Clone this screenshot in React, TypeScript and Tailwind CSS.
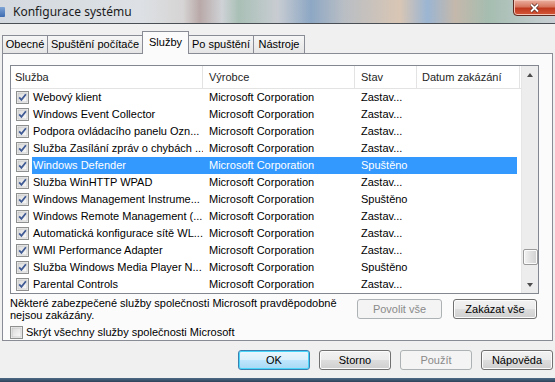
const rows: { name: string; state: string; selected?: boolean }[] = [
  { name: "Webový klient", state: "Zastav..." },
  { name: "Windows Event Collector", state: "Zastav..." },
  { name: "Podpora ovládacího panelu Ozn...", state: "Zastav..." },
  { name: "Služba Zasílání zpráv o chybách ...", state: "Zastav..." },
  { name: "Windows Defender", state: "Spuštěno", selected: true },
  { name: "Služba WinHTTP WPAD", state: "Zastav..." },
  { name: "Windows Management Instrume...", state: "Spuštěno" },
  { name: "Windows Remote Management (...", state: "Zastav..." },
  { name: "Automatická konfigurace sítě WL...", state: "Zastav..." },
  { name: "WMI Performance Adapter", state: "Zastav..." },
  { name: "Služba Windows Media Player N...", state: "Spuštěno" },
  { name: "Parental Controls", state: "Zastav..." },
];

const tabs = [
  { label: "Obecné", w: "w-[46px]" },
  { label: "Spuštění počítače", w: "w-[96px]" },
  { label: "Služby", w: "w-[47px]" },
  { label: "Po spuštění", w: "w-[66px]" },
  { label: "Nástroje", w: "w-[52px]" },
];

function CheckBox({ checked }: { checked: boolean }) {
  return (
    <svg width="13" height="13" viewBox="0 0 13 13" className="shrink-0">
      <defs>
        <linearGradient id="cbg" x1="0" y1="0" x2="1" y2="1">
          <stop offset="0" stopColor="#d9d9d9" />
          <stop offset="1" stopColor="#fbfbfb" />
        </linearGradient>
      </defs>
      <rect x="0.5" y="0.5" width="12" height="12" fill="#f4f4f4" stroke="#8e8f8f" />
      <rect x="2" y="2" width="9" height="9" fill="url(#cbg)" stroke="#b9b9b9" strokeWidth="0.6" />
      {checked && (
        <path d="M3.2 6.4 L5.4 8.8 L9.9 3.2" fill="none" stroke="#3f5a94" strokeWidth="1.8" />
      )}
    </svg>
  );
}

function Button({ label, disabled, primary, w }: { label: string; disabled?: boolean; primary?: boolean; w: string }) {
  if (disabled) {
    return (
      <div className={`${w} flex h-[20px] items-center justify-center rounded-[3px] border border-[#adb2b5] bg-[#f4f4f4] text-[#8a8a8a]`}>
        {label}
      </div>
    );
  }
  if (primary) {
    return (
      <div className={`${w} flex h-[20px] items-center justify-center rounded-[3px] border border-[#3c7fb1] bg-[linear-gradient(#eaf6fd_0%,#d9f0fc_50%,#bee6fd_51%,#a7d9f5_100%)] text-black shadow-[inset_0_0_0_1px_#48d6fb]`}>
        {label}
      </div>
    );
  }
  return (
    <div className={`${w} flex h-[20px] items-center justify-center rounded-[3px] border border-[#707070] bg-[linear-gradient(#f2f2f2_0%,#ebebeb_50%,#dddddd_51%,#cfcfcf_100%)] text-black shadow-[inset_0_0_0_1px_#fcfcfc]`}>
      {label}
    </div>
  );
}

export default function App() {
  return (
    <div className="flex h-[382px] w-[555px] flex-col overflow-hidden bg-[#f0f0f0] font-['Liberation_Sans',Arial,sans-serif] text-[11px] text-black">
      {/* title bar */}
      <div className="relative flex h-[24px] shrink-0 items-center border-b border-[#4a4f55] bg-[linear-gradient(90deg,#d3d9df_0%,#dde1e5_25%,#d6d4d4_33%,#b9a9a8_36%,#cfd2d6_40%,#a9c0b6_43%,#c8ccd2_50%,#8da7c4_56%,#b9bec4_62%,#d9c6b4_72%,#9bb5d2_77%,#c4b8ab_82%,#a5bdb0_88%,#c9cfd5_100%)]">
        <div className="h-[10px] w-[5px] rounded-r-[1px] bg-[linear-gradient(#7ea4d6,#3d6bb0)]" />
        <span className="ml-[8px] font-['Noto_Sans',sans-serif] text-[12px] text-[#1b1b1b]">Konfigurace systému</span>
        <div className="absolute right-[-6px] top-[-1px] flex h-[17px] w-[48px] items-center justify-center rounded-b-[4px] border border-[#5f2a20] bg-[linear-gradient(#eab0a0_0%,#d7765f_45%,#c0391f_55%,#d3583a_100%)] pr-[6px] shadow-[inset_0_0_0_1px_#f3c2b4]">
          <svg width="11" height="10" viewBox="0 0 11 10">
            <path d="M2 1.5 L9 8.5 M9 1.5 L2 8.5" stroke="#5a2a22" strokeWidth="3.2" />
            <path d="M2 1.5 L9 8.5 M9 1.5 L2 8.5" stroke="#ffffff" strokeWidth="1.8" />
          </svg>
        </div>
      </div>

      {/* tabs */}
      <div className="relative z-10 mt-[7px] flex h-[22px] items-end pl-[2px]">
        {tabs.map((t, i) =>
          t.label === "Služby" ? (
            <div key={t.label} className={`${t.w} relative z-10 -mb-px ml-[-1px] flex h-[23px] items-start justify-center border border-b-0 border-[#898c95] bg-[#fbfbfb] pt-[2px]`}>
              {t.label}
            </div>
          ) : (
            <div key={t.label} className={`${t.w} ${i === 0 ? "" : "ml-[-1px]"} flex h-[18px] items-center justify-center border border-b-0 border-[#898c95] bg-[linear-gradient(#f6f6f6,#e5e5e5)]`}>
              {t.label}
            </div>
          )
        )}
      </div>

      {/* panel */}
      <div className="ml-[2px] flex h-[288px] w-[551px] flex-col border border-[#898c95] bg-[#fbfbfb] pl-[7px] pt-[11px]">
        {/* list */}
        <div className="flex h-[229px] w-[529px] border border-[#828790] bg-white">
          <div className="flex w-[510px] flex-col">
            <div className="flex h-[23px] shrink-0 items-center border-b border-[#e3e3e3] text-[#1e1e1e]">
              <div className="w-[192px] border-r border-[#e3e3e3] pl-[4px] leading-[22px]">Služba</div>
              <div className="w-[152px] border-r border-[#e3e3e3] pl-[6px] leading-[22px]">Výrobce</div>
              <div className="w-[62px] border-r border-[#e3e3e3] pl-[6px] leading-[22px]">Stav</div>
              <div className="w-[103px] border-r border-[#e3e3e3] pl-[5px] leading-[22px]">Datum zakázání</div>
            </div>
            {rows.map((r) => (
              <div key={r.name} className="flex h-[17px] shrink-0 items-center">
                <div className="flex w-[21px] justify-start pl-[5px]">
                  <CheckBox checked />
                </div>
                <div className={`flex h-[17px] w-[485px] items-center ${r.selected ? "bg-[#3399ff] text-white" : ""}`}>
                  <div className="w-[171px] overflow-hidden whitespace-nowrap pl-[1px]">{r.name}</div>
                  <div className="w-[152px] pl-[6px]">Microsoft Corporation</div>
                  <div className="w-[62px] pl-[6px]">{r.state}</div>
                </div>
              </div>
            ))}
          </div>
          {/* scrollbar */}
          <div className="flex w-[17px] flex-col items-center border-l border-[#e6e6e6] bg-[#ededed]">
            <div className="flex h-[17px] w-full items-center justify-center">
              <div className="h-0 w-0 border-x-[3.5px] border-b-[4px] border-x-transparent border-b-[#4d4d4d]" />
            </div>
            <div className="flex-1" />
            <div className="mb-[11px] h-[16px] w-[15px] rounded-[2px] border border-[#9a9a9a] bg-[linear-gradient(90deg,#f3f3f3,#e0e0e0_50%,#d2d2d2)] shadow-[inset_0_0_0_1px_#fbfbfb]" />
            <div className="flex h-[17px] w-full items-center justify-center">
              <div className="h-0 w-0 border-x-[3.5px] border-t-[4px] border-x-transparent border-t-[#4d4d4d]" />
            </div>
          </div>
        </div>

        {/* note + buttons */}
        <div className="flex w-[529px] items-start">
          <div className="mt-[2px] w-[340px] leading-[12px]">
            <div className="pt-[1px]">Některé zabezpečené služby společnosti Microsoft pravděpodobně</div>
            <div>nejsou zakázány.</div>
          </div>
          <div className="ml-auto mr-[2px] mt-[5px] flex gap-[11px]">
            <Button label="Povolit vše" disabled w="w-[85px]" />
            <Button label="Zakázat vše" w="w-[84px]" />
          </div>
        </div>
        <div className="mt-[3px] flex items-center gap-[3px]">
          <CheckBox checked={false} />
          <span>Skrýt všechny služby společnosti Microsoft</span>
        </div>
      </div>

      {/* bottom buttons */}
      <div className="mt-[9px] flex justify-end gap-[9px] pr-[2px]">
        <Button label="OK" primary w="w-[72px]" />
        <Button label="Storno" w="w-[72px]" />
        <Button label="Použít" disabled w="w-[72px]" />
        <Button label="Nápověda" w="w-[72px]" />
      </div>
      <div className="flex-1" />
      <div className="h-[4px] shrink-0 bg-[linear-gradient(#4d6a86,#2e4258)]" />
    </div>
  );
}
